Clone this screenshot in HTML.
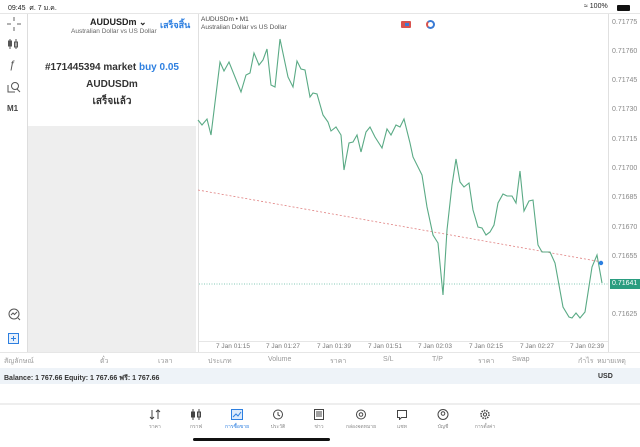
<!DOCTYPE html>
<html><head><meta charset="utf-8"><style>
*{margin:0;padding:0;box-sizing:border-box}
body{width:640px;height:447px;overflow:hidden;background:#fff;font-family:"Liberation Sans","Noto Sans CJK SC",sans-serif;position:relative;color:#222}
.a{position:absolute}
.th{font-size:7px;color:#999;top:356px}
.tab{position:absolute;top:409px;width:40px;margin-left:-20px;text-align:center;font-size:5px;color:#888}
.tab svg{display:block;margin:0 auto 3px}
.yl{position:absolute;left:612px;font-size:7px;color:#888}
.xl{position:absolute;top:343px;font-size:6.5px;color:#777}
</style></head><body>
<div class="a" style="left:8px;top:3px;font-size:7px;color:#222">09:45&nbsp;&nbsp;ศ. 7 ม.ค.</div>
<div class="a" style="left:584px;top:3px;font-size:7px">&#8776; 100%</div>
<div class="a" style="left:617px;top:5px;width:13px;height:6px;background:#111;border-radius:1px"></div>
<div class="a" style="left:0;top:13px;width:640px;height:1px;background:#e6e6e6"></div>
<!-- left toolbar -->
<svg class="a" style="left:7px;top:17px" width="14" height="14"><g stroke="#666" stroke-width="1"><path d="M7 0v4M7 10v4M0 7h4M10 7h4"/></g></svg>
<svg class="a" style="left:7px;top:38px" width="14" height="12"><g stroke="#555" fill="none"><line x1="3" y1="1" x2="3" y2="11"/><rect x="1.5" y="3" width="3" height="5" fill="#555"/><line x1="9" y1="1" x2="9" y2="11"/><rect x="7.5" y="4" width="3" height="5"/></g></svg>
<div class="a" style="left:9px;top:59px;font-size:11px;font-style:italic;color:#555">ƒ</div>
<svg class="a" style="left:7px;top:81px" width="14" height="12"><g stroke="#555" fill="none"><circle cx="8" cy="5" r="3.5"/><path d="M1 4v7h7M10 8l3 3"/></g></svg>
<div class="a" style="left:7px;top:104px;font-size:8px;font-weight:bold;color:#444">M1</div>
<svg class="a" style="left:7px;top:307px" width="14" height="14"><g stroke="#555" fill="none"><circle cx="7" cy="7" r="5"/><path d="M4 8l2-2 1.5 1.5L10 5M11 11l2 2"/></g></svg>
<svg class="a" style="left:8px;top:333px" width="11" height="11"><rect x="0.5" y="0.5" width="10" height="10" fill="#e8f1fc" stroke="#2d7fe0"/><path d="M5.5 3v5M3 5.5h5" stroke="#2d7fe0"/></svg>
<!-- left panel -->
<div class="a" style="left:27px;top:14px;width:169px;height:338px;background:#eeeeee;border-left:1px solid #ddd"></div>
<div class="a" style="left:28px;top:14px;width:168px;height:112px;background:#fff"></div>
<div class="a" style="left:90px;top:17px;font-size:9px;font-weight:bold">AUDUSDm &#8964;</div>
<div class="a" style="left:71px;top:28px;font-size:6.5px;color:#666">Australian Dollar vs US Dollar</div>
<div class="a" style="left:160px;top:18px;font-size:9px;font-weight:bold;color:#2d7fe0">เสร็จสิ้น</div>
<div class="a" style="left:28px;top:59px;width:168px;text-align:center;font-size:10px;font-weight:bold;color:#333;line-height:17px">#171445394 market <span style="color:#2d7fe0">buy 0.05</span><br>AUDUSDm<br>เสร็จแล้ว</div>
<!-- chart -->
<div class="a" style="left:198px;top:14px;width:1px;height:338px;background:#e0e0e0"></div>
<div class="a" style="left:608px;top:14px;width:1px;height:338px;background:#e0e0e0"></div>
<div class="a" style="left:199px;top:341px;width:409px;height:1px;background:#e6e6e6"></div>
<div class="a" style="left:201px;top:16px;font-size:6.5px;color:#444">AUDUSDm • M1</div>
<div class="a" style="left:201px;top:24px;font-size:6.5px;color:#555">Australian Dollar vs US Dollar</div>
<div class="a" style="left:401px;top:21px;width:10px;height:7px;background:#d9534f;border-radius:1px"><div style="margin:2px 0 0 4px;width:4px;height:3px;background:#3a7bd5"></div></div>
<div class="a" style="left:426px;top:20px;width:9px;height:9px;border-radius:50%;border:2px solid #3a7bd5;border-left-color:#d9534f"></div>
<svg class="a" style="left:0;top:0" width="640" height="447">
<line x1="198" y1="190" x2="602" y2="262" stroke="#e08080" stroke-width="0.8" stroke-dasharray="2,2"/>
<line x1="199" y1="284" x2="608" y2="284" stroke="#5fb8a0" stroke-width="0.8" stroke-dasharray="1,1.5"/>
<polyline fill="none" stroke="#5aaa85" stroke-width="1.1" points="198,120 202,125 207,119 211,135 220,62 224,71 229,62 241,92 246,75 250,73 254,53 259,65 263,60 267,49 271,85 275,87 280,39 288,77 293,87 297,61 301,69 305,70 310,97 313,93 317,94 323,115 328,122 331,131 336,127 341,135 344,170 349,143 353,142 357,135 361,152 366,132 370,127 375,137 382,148 387,129 391,135 396,125 400,127 404,119 410,143 413,157 422,175 427,207 433,235 438,243 443,295 447,230 452,185 456,159 460,182 464,187 469,183 473,210 478,227 482,228 486,235 490,232 494,225 498,203 503,194 507,196 512,196 516,203 520,171 524,211 529,201 533,200 538,245 542,252 550,252 555,263 563,307 569,317 572,318 576,313 580,318 585,312 592,267 597,255 602,283"/>
<circle cx="601" cy="263" r="2.2" fill="#2d7fe0"/>
</svg>
<div class="yl" style="top:19px">0.71775</div>
<div class="yl" style="top:48px">0.71760</div>
<div class="yl" style="top:77px">0.71745</div>
<div class="yl" style="top:106px">0.71730</div>
<div class="yl" style="top:136px">0.71715</div>
<div class="yl" style="top:165px">0.71700</div>
<div class="yl" style="top:194px">0.71685</div>
<div class="yl" style="top:224px">0.71670</div>
<div class="yl" style="top:253px">0.71655</div>
<div class="a" style="left:610px;top:279px;width:30px;height:10px;background:#2a9d80;color:#fff;font-size:7px;padding:1px 0 0 2px">0.71641</div>
<div class="yl" style="top:311px">0.71625</div>
<div class="xl" style="left:216px">7 Jan 01:15</div>
<div class="xl" style="left:266px">7 Jan 01:27</div>
<div class="xl" style="left:317px">7 Jan 01:39</div>
<div class="xl" style="left:368px">7 Jan 01:51</div>
<div class="xl" style="left:418px">7 Jan 02:03</div>
<div class="xl" style="left:469px">7 Jan 02:15</div>
<div class="xl" style="left:520px">7 Jan 02:27</div>
<div class="xl" style="left:570px">7 Jan 02:39</div>
<!-- table -->
<div class="a" style="left:0;top:352px;width:640px;height:1px;background:#e6e6e6"></div>
<div class="a th" style="left:4px">สัญลักษณ์</div>
<div class="a th" style="left:100px">ตั๋ว</div>
<div class="a th" style="left:158px">เวลา</div>
<div class="a th" style="left:208px">ประเภท</div>
<div class="a th" style="left:268px">Volume</div>
<div class="a th" style="left:330px">ราคา</div>
<div class="a th" style="left:383px">S/L</div>
<div class="a th" style="left:432px">T/P</div>
<div class="a th" style="left:478px">ราคา</div>
<div class="a th" style="left:512px">Swap</div>
<div class="a th" style="left:578px">กำไร</div>
<div class="a th" style="left:597px">หมายเหตุ</div>
<div class="a" style="left:0;top:368px;width:640px;height:16px;background:#eef3f8"></div>
<div class="a" style="left:4px;top:373px;font-size:7px;font-weight:bold;color:#333">Balance: 1 767.66 Equity: 1 767.66 ฟรี: 1 767.66</div>
<div class="a" style="left:598px;top:373px;font-size:7px;font-weight:bold;color:#333">USD</div>
<div class="a" style="left:0;top:403px;width:640px;height:2px;background:#eee"></div>
<!-- tabs -->
<div class="tab" style="left:155px"><svg width="12" height="11"><path d="M3 1v9M1 8l2 2 2-2M9 10V1M7 3l2-2 2 2" stroke="#444" fill="none"/></svg>ราคา</div>
<div class="tab" style="left:196px"><svg width="12" height="11"><g stroke="#444" fill="none"><line x1="3" y1="0" x2="3" y2="11"/><rect x="1.5" y="3" width="3" height="5" fill="#444"/><line x1="9" y1="0" x2="9" y2="11"/><rect x="7.5" y="3" width="3" height="5"/></g></svg>กราฟ</div>
<div class="tab" style="left:237px;color:#2d7fe0"><svg width="12" height="11"><rect x="0.5" y="0.5" width="11" height="10" fill="#dceafb" stroke="#2d7fe0"/><path d="M2 8l3-3 2 2 3-4" stroke="#2d7fe0" fill="none"/></svg>การซื้อขาย</div>
<div class="tab" style="left:278px"><svg width="12" height="11"><circle cx="6" cy="5.5" r="4.5" stroke="#444" fill="none"/><path d="M6 3v3l2 1" stroke="#444" fill="none"/></svg>ประวัติ</div>
<div class="tab" style="left:319px"><svg width="12" height="11"><rect x="1.5" y="0.5" width="9" height="10" stroke="#444" fill="none"/><path d="M3 3h6M3 5h6M3 7h6" stroke="#444"/></svg>ข่าว</div>
<div class="tab" style="left:361px"><svg width="12" height="11"><circle cx="6" cy="5.5" r="4.5" stroke="#444" fill="none"/><circle cx="6" cy="5.5" r="1.8" stroke="#444" fill="none"/></svg>กล่องจดหมาย</div>
<div class="tab" style="left:402px"><svg width="12" height="11"><path d="M1.5 1.5h9v7h-5l-2 2v-2h-2z" stroke="#444" fill="none"/></svg>แชท</div>
<div class="tab" style="left:443px"><svg width="12" height="11"><circle cx="6" cy="5.5" r="5" stroke="#444" fill="none"/><circle cx="6" cy="4.5" r="1.8" stroke="#444" fill="none"/></svg>บัญชี</div>
<div class="tab" style="left:485px"><svg width="12" height="11"><circle cx="6" cy="5.5" r="4" stroke="#444" stroke-width="1.6" stroke-dasharray="1.5,1" fill="none"/><circle cx="6" cy="5.5" r="1.6" stroke="#444" fill="none"/></svg>การตั้งค่า</div>
<div class="a" style="left:193px;top:438px;width:137px;height:3px;background:#111;border-radius:2px"></div>
</body></html>
